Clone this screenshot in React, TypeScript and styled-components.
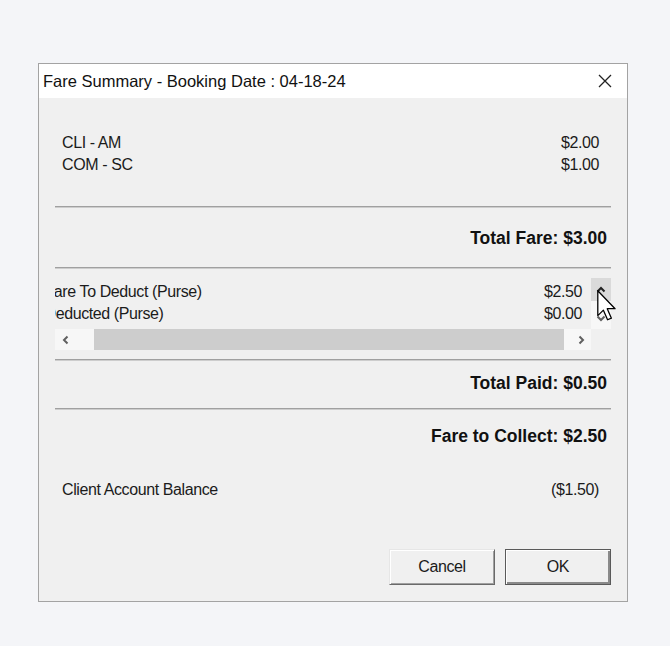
import React from 'react';
import styled, { createGlobalStyle } from 'styled-components';

const GlobalStyle = createGlobalStyle`
  html, body {
    margin: 0;
    padding: 0;
    background: #f4f5f8;
  }
  body {
    font-family: "Liberation Sans", Arial, sans-serif;
  }
`;

const Page = styled.div`
  box-sizing: border-box;
  min-height: 646px;
  padding: 63px 0 0 38px;
`;

const Dialog = styled.div`
  box-sizing: border-box;
  width: 590px;
  height: 539px;
  border: 1px solid #a3a3a3;
  background: #f0f0f0;
  display: flex;
  flex-direction: column;
`;

const TitleBar = styled.div`
  height: 34px;
  background: #fff;
  display: flex;
  align-items: center;
  justify-content: space-between;
  padding: 0 15px 0 4px;
  font-size: 16.5px;
  color: #111;
`;

const CloseButton = styled.span`
  display: flex;
  width: 14px;
  height: 14px;
`;

const Body = styled.div`
  flex: 1;
  display: flex;
  flex-direction: column;
  padding: 0 16px 16px;
`;

const Block = styled.div<{ $gap?: number }>`
  margin-top: ${(p) => p.$gap || 0}px;
`;

const Row = styled.div<{ $indent?: number; $right?: number }>`
  display: flex;
  justify-content: space-between;
  height: 22px;
  line-height: 22px;
  padding-left: ${(p) => p.$indent || 0}px;
  padding-right: ${(p) => p.$right || 0}px;
  font-size: 16px;
  letter-spacing: -0.4px;
  color: #1b1b1b;
  white-space: nowrap;
`;

const TotalRow = styled.div<{ $gap?: number }>`
  margin-top: ${(p) => p.$gap || 0}px;
  height: 22px;
  line-height: 22px;
  text-align: right;
  padding-right: 4px;
  font-size: 17.5px;
  font-weight: bold;
  color: #111;
`;

const Separator = styled.hr<{ $gap?: number }>`
  margin: ${(p) => p.$gap || 0}px 0 0;
  height: 0;
  border: 0;
  border-top: 1px solid #a0a0a0;
  border-bottom: 1px solid #cdcdcd;
`;

const ScrollBox = styled.div<{ $gap?: number }>`
  position: relative;
  margin-top: ${(p) => p.$gap || 0}px;
  display: grid;
  grid-template-columns: 1fr 20px;
  grid-template-rows: 51px 21px;
`;

const Viewport = styled.div`
  overflow: hidden;
  padding-top: 3px;
`;

const ScrollContent = styled.div<{ $offset: number }>`
  margin-left: -${(p) => p.$offset}px;
  padding-right: 9px;
`;

const VBar = styled.div`
  display: flex;
  flex-direction: column;
  justify-content: space-between;
  background: #f7f7f7;
`;

const ArrowButton = styled.div<{ $w?: number; $h?: number; $hover?: boolean }>`
  display: flex;
  align-items: center;
  justify-content: center;
  flex: none;
  width: ${(p) => (p.$w ? `${p.$w}px` : 'auto')};
  height: ${(p) => (p.$h ? `${p.$h}px` : 'auto')};
  background: ${(p) => (p.$hover ? '#dadada' : 'transparent')};
`;

const HBar = styled.div`
  display: flex;
  background: #f7f7f7;
`;

const Track = styled.div`
  flex: 1;
  display: flex;
`;

const Thumb = styled.div`
  margin-left: 18px;
  width: 470px;
  background: #cdcdcd;
`;

const Corner = styled.div`
  background: #f0f0f0;
`;

const Cursor = styled.svg`
  position: absolute;
  left: 542px;
  top: 12px;
`;

const ButtonRow = styled.div<{ $gap?: number }>`
  margin-top: ${(p) => p.$gap || 0}px;
  display: flex;
  justify-content: flex-end;
  gap: 10px;
`;

const DialogButton = styled.button<{ $default?: boolean }>`
  box-sizing: border-box;
  width: 106px;
  height: 36px;
  padding: 0;
  background: #f0f0f0;
  font-family: "Liberation Sans", Arial, sans-serif;
  font-size: 16px;
  letter-spacing: -0.4px;
  color: #1b1b1b;
  border: 1px solid;
  border-color: ${(p) => (p.$default ? '#5a5a5a' : '#e6e6e6 #6a6a6a #6a6a6a #e6e6e6')};
  box-shadow: ${(p) =>
    p.$default
      ? 'inset 1px 1px #fff, inset -2px -2px #8a8a8a'
      : 'inset 1px 1px #fff, inset -1px -1px #a0a0a0'};
`;

const Chevron = ({ dir, color = '#606060' }: { dir: 'left' | 'right' | 'up' | 'down'; color?: string }): JSX.Element => {
  const points = {
    left: '6.5,1.5 3,5 6.5,8.5',
    right: '3.5,1.5 7,5 3.5,8.5',
    up: '1.5,6.5 5,3 8.5,6.5',
    down: '1.5,3.5 5,7 8.5,3.5',
  }[dir];
  return (
    <svg width="10" height="10" viewBox="0 0 10 10">
      <polyline points={points} fill="none" stroke={color} strokeWidth="2" />
    </svg>
  );
};

const fareLines = [
  { label: 'CLI - AM', amount: '$2.00' },
  { label: 'COM - SC', amount: '$1.00' },
];

const purseLines = [
  { label: 'Fare To Deduct (Purse)', amount: '$2.50' },
  { label: 'Deducted (Purse)', amount: '$0.00' },
];

const App = (): JSX.Element => (
  <Page>
    <GlobalStyle />
    <Dialog>
      <TitleBar>
        <span>Fare Summary - Booking Date : 04-18-24</span>
        <CloseButton>
          <svg width="14" height="14" viewBox="0 0 14 14">
            <path d="M1 1 L13 13 M13 1 L1 13" stroke="#222" strokeWidth="1.3" />
          </svg>
        </CloseButton>
      </TitleBar>
      <Body>
        <Block $gap={34}>
          {fareLines.map((line) => (
            <Row key={line.label} $indent={7} $right={12}>
              <span>{line.label}</span>
              <span>{line.amount}</span>
            </Row>
          ))}
        </Block>
        <Separator $gap={30} />
        <TotalRow $gap={19}>Total Fare: $3.00</TotalRow>
        <Separator $gap={18} />
        <ScrollBox $gap={9}>
          <Viewport>
            <ScrollContent $offset={10.5}>
              {purseLines.map((line) => (
                <Row key={line.label}>
                  <span>{line.label}</span>
                  <span>{line.amount}</span>
                </Row>
              ))}
            </ScrollContent>
          </Viewport>
          <VBar>
            <ArrowButton $h={23} $hover>
              <Chevron dir="up" color="#222" />
            </ArrowButton>
            <ArrowButton $h={23}>
              <Chevron dir="down" />
            </ArrowButton>
          </VBar>
          <HBar>
            <ArrowButton $w={21}>
              <Chevron dir="left" />
            </ArrowButton>
            <Track>
              <Thumb />
            </Track>
            <ArrowButton $w={21}>
              <Chevron dir="right" />
            </ArrowButton>
          </HBar>
          <Corner />
          <Cursor width="20" height="32" viewBox="0 0 12.5 20">
            <path
              d="M0.5 0.5 L0.5 16 L4 12.6 L6.6 18.6 L9 17.6 L6.4 11.7 L11.3 11.7 Z"
              fill="#fff"
              stroke="#000"
              strokeWidth="0.8"
              strokeLinejoin="round"
            />
          </Cursor>
        </ScrollBox>
        <Separator $gap={9} />
        <TotalRow $gap={11}>Total Paid: $0.50</TotalRow>
        <Separator $gap={14} />
        <TotalRow $gap={15}>Fare to Collect: $2.50</TotalRow>
        <Block $gap={32}>
          <Row $indent={7} $right={12}>
            <span>Client Account Balance</span>
            <span>($1.50)</span>
          </Row>
        </Block>
        <ButtonRow $gap={48}>
          <DialogButton>Cancel</DialogButton>
          <DialogButton $default>OK</DialogButton>
        </ButtonRow>
      </Body>
    </Dialog>
  </Page>
);

export default App;
